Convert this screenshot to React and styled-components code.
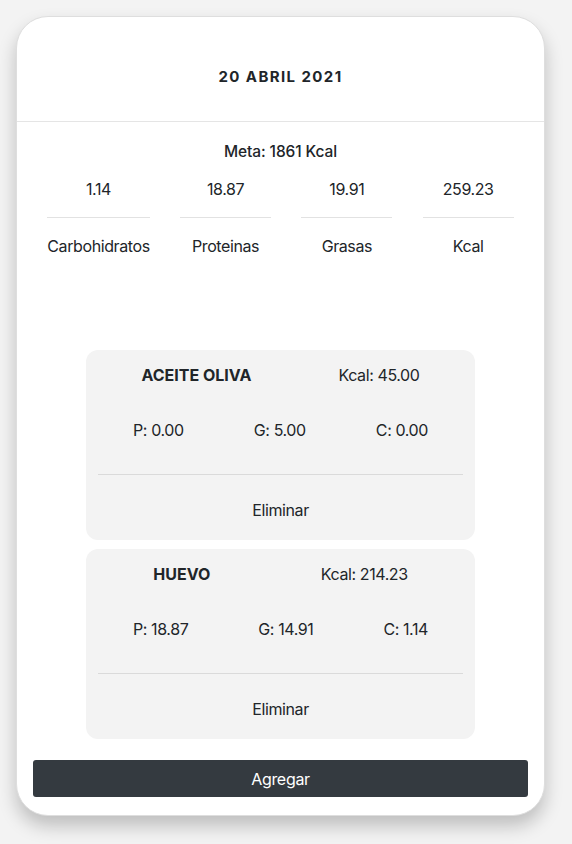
import React from 'react';
import styled, { createGlobalStyle } from 'styled-components';

const GlobalStyle = createGlobalStyle`
  body {
    margin: 0;
    background: #f3f3f3;
    font-family: Inter, "Liberation Sans", sans-serif;
    color: #212529;
  }
`

const Page = styled.main`
  padding: 16px 27px 28px 16px;
`

const Card = styled.div`
  background: #fff;
  border: 1px solid #dedede;
  border-radius: 32px;
  box-shadow: 0 10px 18px rgba(0, 0, 0, 0.22);
  display: flex;
  flex-direction: column;
  padding-bottom: 18px;
`

const Header = styled.div`
  padding: 48px 0 32px;
  border-bottom: 1px solid #e5e5e5;
  text-align: center;
  font-size: 15px;
  font-weight: 700;
  letter-spacing: 1.4px;
  line-height: 24px;
`

const Goal = styled.div`
  margin-top: 18px;
  text-align: center;
  font-size: 15.5px;
  font-weight: 500;
  letter-spacing: -0.1px;
  line-height: 24px;
`

const Totals = styled.div`
  display: flex;
  justify-content: space-evenly;
  margin-top: 13px;
  margin-bottom: 92px;
`

const TotalItem = styled.div`
  display: flex;
  flex-direction: column;
  align-items: center;
  min-width: 91px;
  font-size: 16px;
  letter-spacing: -0.4px;
  line-height: 24px;

  hr {
    width: 100%;
    margin: 16px 0;
    border: 0;
    border-top: 1px solid #e2e2e2;
  }
`

const FoodList = styled.div`
  display: flex;
  flex-direction: column;
  align-items: center;
  gap: 9px;
`

const FoodCard = styled.div`
  width: 389px;
  box-sizing: border-box;
  background: #f3f3f3;
  border-radius: 12px;
  padding: 13px 12px 18px;
  font-size: 16px;
  letter-spacing: -0.4px;
  line-height: 24px;
`

const Row = styled.div`
  display: flex;
  justify-content: space-around;
`

const Name = styled.span`
  font-weight: 700;
  letter-spacing: 0;
`

const Macros = styled(Row)`
  margin-top: 31px;
  padding-bottom: 32px;
  border-bottom: 1px solid #dadada;
`

const Remove = styled.div`
  margin-top: 23px;
  text-align: center;
`

const AddButton = styled.button`
  margin: 21px 16px 0;
  height: 37px;
  background: #343a40;
  color: #fff;
  border: 0;
  border-radius: 3px;
  font-family: inherit;
  font-size: 16px;
  letter-spacing: -0.3px;
`

const totals = [
  { value: '1.14', label: 'Carbohidratos' },
  { value: '18.87', label: 'Proteinas' },
  { value: '19.91', label: 'Grasas' },
  { value: '259.23', label: 'Kcal' },
]

const foods = [
  { name: 'ACEITE OLIVA', kcal: '45.00', p: '0.00', g: '5.00', c: '0.00' },
  { name: 'HUEVO', kcal: '214.23', p: '18.87', g: '14.91', c: '1.14' },
]

function App() {
  return (
    <Page>
      <GlobalStyle />
      <Card>
        <Header>20 ABRIL 2021</Header>
        <Goal>Meta: 1861 Kcal</Goal>
        <Totals>
          {totals.map(t => (
            <TotalItem key={t.label}>
              <span>{t.value}</span>
              <hr />
              <span>{t.label}</span>
            </TotalItem>
          ))}
        </Totals>
        <FoodList>
          {foods.map(f => (
            <FoodCard key={f.name}>
              <Row>
                <Name>{f.name}</Name>
                <span>Kcal: {f.kcal}</span>
              </Row>
              <Macros>
                <span>P: {f.p}</span>
                <span>G: {f.g}</span>
                <span>C: {f.c}</span>
              </Macros>
              <Remove>Eliminar</Remove>
            </FoodCard>
          ))}
        </FoodList>
        <AddButton>Agregar</AddButton>
      </Card>
    </Page>
  );
}

export default App;
